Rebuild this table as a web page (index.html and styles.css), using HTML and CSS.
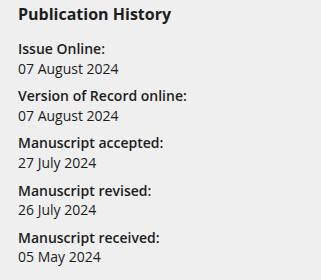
FILE: index.html
```html
<!DOCTYPE html>
<html lang="en">
<head>
    <meta charset="UTF-8">
    <meta name="viewport" content="width=device-width, initial-scale=1.0">
    <title>Publication History</title>
    <link rel="stylesheet" href="styles.css">
</head>
<body>
    <section class="pub-history">
        <h2>Publication History</h2>

        <div class="pub-item">
            <div class="pub-label">Issue Online:</div>
            <div class="pub-date">07 August 2024</div>
        </div>
        <div class="pub-item">
            <div class="pub-label">Version of Record online:</div>
            <div class="pub-date">07 August 2024</div>
        </div>
        <div class="pub-item">
            <div class="pub-label">Manuscript accepted:</div>
            <div class="pub-date">27 July 2024</div>
        </div>
        <div class="pub-item">
            <div class="pub-label">Manuscript revised:</div>
            <div class="pub-date">26 July 2024</div>
        </div>
        <div class="pub-item">
            <div class="pub-label">Manuscript received:</div>
            <div class="pub-date">05 May 2024</div>
        </div>
    </section>
</body>
</html>
```

FILE: styles.css
```css
body {
    margin: 0;
    background-color: #efefef;
    font-family: "Open Sans", Arial, sans-serif;
    color: #1c1d1e;
}

.pub-history {
    padding: 3px 18px;
}

h2 {
    font-size: 16px;
    font-weight: 700;
    margin: 0 0 14px 0;
    line-height: 22px;
}

.pub-item {
    margin-bottom: 8px;
    font-size: 14px;
    line-height: 1.4;
}

.pub-label {
    font-weight: 600;
}

.pub-date {
    font-weight: 400;
}
```
